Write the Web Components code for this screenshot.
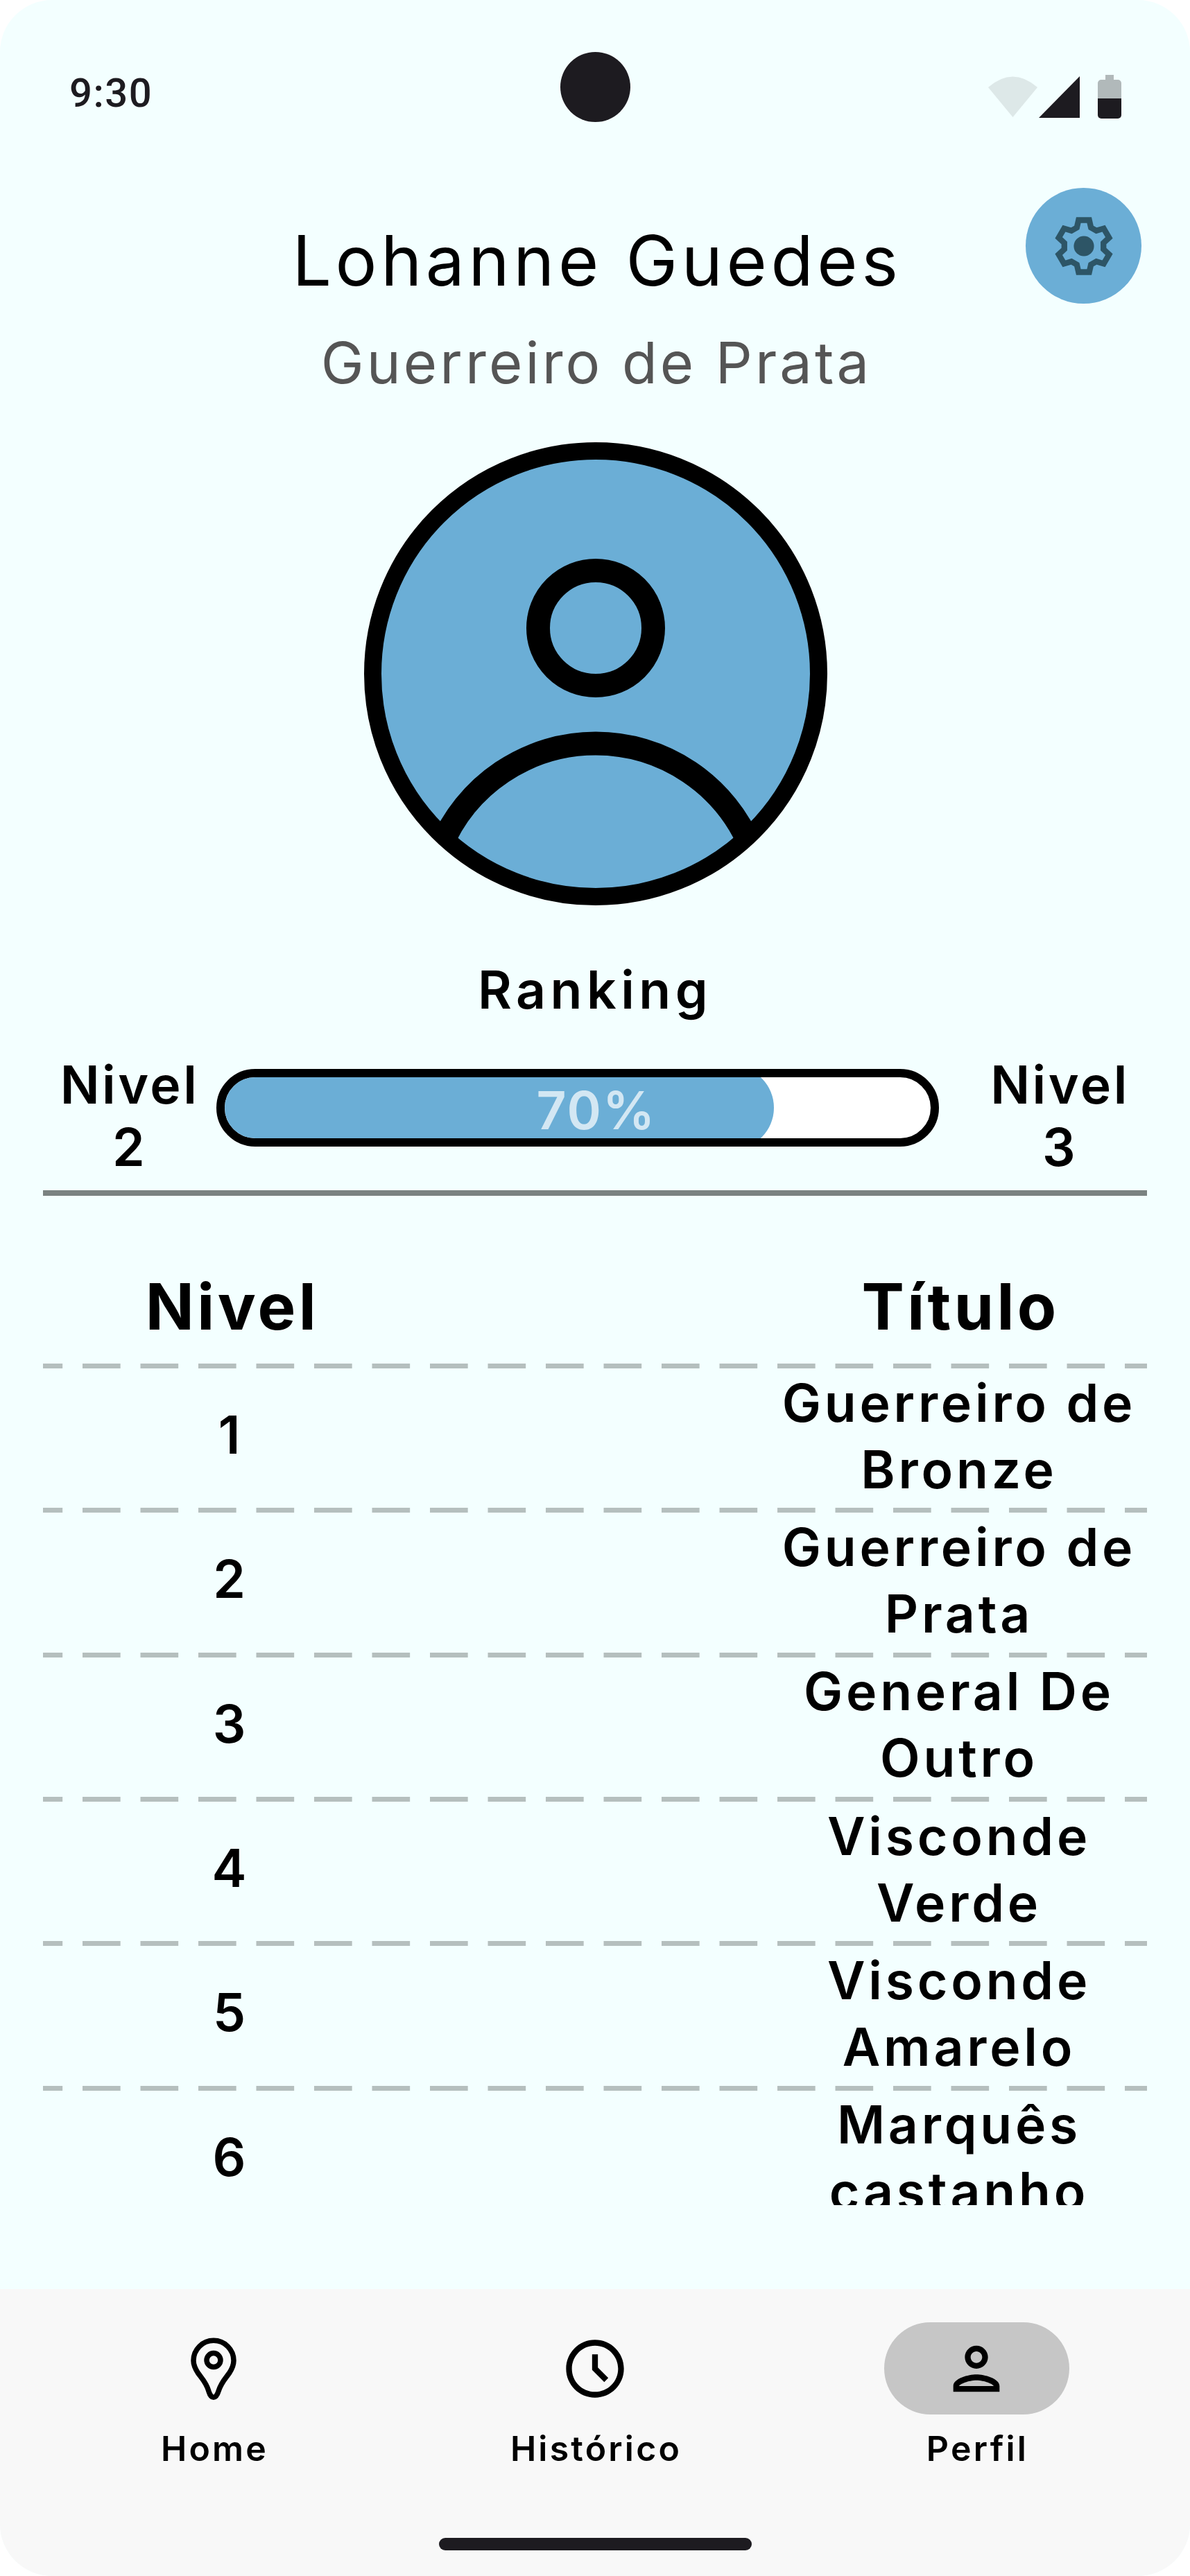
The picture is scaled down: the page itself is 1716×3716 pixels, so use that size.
<!DOCTYPE html>
<html lang="pt">
<head>
<meta charset="utf-8">
<title>Perfil</title>
<style>
	html, body { margin: 0; background: #fff; }
</style>
</head>
<body>
<phone-screen>
	<status-bar></status-bar>
	<profile-header name="Lohanne Guedes" rank="Guerreiro de Prata"></profile-header>
	<profile-avatar></profile-avatar>
	<rank-progress from="2" to="3" percent="70"></rank-progress>
	<rank-table>
		<rank-row level="1">Guerreiro de<br>Bronze</rank-row>
		<rank-row level="2">Guerreiro de<br>Prata</rank-row>
		<rank-row level="3">General De<br>Outro</rank-row>
		<rank-row level="4">Visconde<br>Verde</rank-row>
		<rank-row level="5">Visconde<br>Amarelo</rank-row>
		<rank-row level="6">Marquês<br>castanho</rank-row>
	</rank-table>
	<bottom-nav slot="nav">
		<nav-item>
			<svg slot="icon" width="100" height="100" viewBox="28.4 26.7 100 100" fill="none" stroke="#000" stroke-width="7.5">
				<path d="M78.4 36C94.4 36 107.4 49 107.4 65C107.4 72 105 77 101 83C96 90 89 97 85.5 109C84 114 81.5 118 78.4 118C75.3 118 72.8 114 71.3 109C68 97 61 90 56 83C52 77 49.4 72 49.4 65C49.4 49 62.4 36 78.4 36Z"/>
				<circle cx="78.4" cy="64.3" r="10"/>
			</svg>
			Home
		</nav-item>
		<nav-item>
			<svg slot="icon" width="100" height="100" viewBox="0 0 24 24">
				<path d="M11.99 2C6.47 2 2 6.48 2 12s4.47 10 9.99 10C17.52 22 22 17.52 22 12S17.52 2 11.99 2zM12 20c-4.42 0-8-3.58-8-8s3.58-8 8-8 8 3.58 8 8-3.58 8-8 8z"/>
				<path d="M11 7h2v4.6l3.6 3.6-1.4 1.4-4.2-4.2z"/>
			</svg>
			Histórico
		</nav-item>
		<nav-item active>
			<svg slot="icon" width="100" height="100" viewBox="0 0 24 24">
				<path d="M12 6c1.1 0 2 .9 2 2s-.9 2-2 2-2-.9-2-2 .9-2 2-2m0 10c2.7 0 5.8 1.29 6 2H6c.23-.72 3.31-2 6-2m0-12C9.79 4 8 5.79 8 8s1.79 4 4 4 4-1.79 4-4-1.79-4-4-4zm0 10c-2.67 0-8 1.34-8 4v2h16v-2c0-2.66-5.33-4-8-4z"/>
			</svg>
			Perfil
		</nav-item>
	</bottom-nav>
</phone-screen>

<script>
const FONT = `Inter, "Noto Sans", sans-serif`;

class PhoneScreen extends HTMLElement {
	constructor() {
		super();
		this.attachShadow({ mode: "open" }).innerHTML = `<style>
			:host {
				display: flex;
				flex-direction: column;
				width: 1716px;
				height: 3716px;
				background: #f3ffff;
				border-radius: 75px;
				overflow: hidden;
				color: #000;
				font-family: ${FONT};
			}
			main { flex: 1; display: flex; flex-direction: column; min-height: 0; }
		</style>
		<main><slot></slot></main>
		<slot name="nav"></slot>`;
	}
}
customElements.define("phone-screen", PhoneScreen);

class StatusBar extends HTMLElement {
	constructor() {
		super();
		this.attachShadow({ mode: "open" }).innerHTML = `<style>
			:host {
				display: grid;
				grid-template-columns: 1fr 101px 1fr;
				height: 271px;
				box-sizing: border-box;
				color: #1d1b20;
			}
			.time {
				font: 500 58px/70px Roboto, sans-serif;
				letter-spacing: 1.5px;
				padding: 99px 0 0 100px;
			}
			.camera {
				width: 101px;
				height: 101px;
				margin-top: 75px;
				border-radius: 50%;
				background: #1d1b20;
			}
			svg { justify-self: end; margin: 105px 96px 0 0; }
		</style>
		<div class="time">9:30</div>
		<div class="camera"></div>
		<svg width="200" height="70" viewBox="1420 105 200 70">
			<path d="M1460.5 169L1425 126Q1460.5 95 1496 126Z" fill="#dde8e8"/>
			<path d="M1557 110V170H1498Z" fill="#1d1b20"/>
			<path d="M1594 108h12v7h6a5 5 0 0 1 5 5v22h-34v-22a5 5 0 0 1 5-5h6z" fill="#b1b9ba"/>
			<path d="M1583 142h34v24a5 5 0 0 1-5 5h-24a5 5 0 0 1-5-5z" fill="#1d1b20"/>
		</svg>`;
	}
}
customElements.define("status-bar", StatusBar);

class SettingsButton extends HTMLElement {
	constructor() {
		super();
		// dente da engrenagem, repetido de 60 em 60 graus
		const tooth = [[-2.45, -6.4], [-1.85, -9], [1.85, -9], [2.45, -6.4]];
		const pts = [];
		for (let i = 0; i < 6; i++) {
			const a = (i * Math.PI) / 3;
			const c = Math.cos(a);
			const s = Math.sin(a);
			tooth.forEach(([x, y]) => {
				pts.push(`${(12 + x * c - y * s).toFixed(2)},${(12 + x * s + y * c).toFixed(2)}`);
			});
		}
		this.attachShadow({ mode: "open" }).innerHTML = `<style>
			:host {
				display: flex;
				align-items: center;
				justify-content: center;
				width: 167px;
				height: 167px;
				border-radius: 50%;
				background: #6baed6;
			}
		</style>
		<svg width="100" height="100" viewBox="0 0 24 24">
			<polygon points="${pts.join(" ")}" fill="none" stroke="#2d5566" stroke-width="2"/>
			<circle cx="12" cy="12" r="3.5" fill="#2d5566"/>
		</svg>`;
	}
}
customElements.define("settings-button", SettingsButton);

class ProfileHeader extends HTMLElement {
	constructor() {
		super();
		this.attachShadow({ mode: "open" }).innerHTML = `<style>
			:host {
				display: grid;
				grid-template-columns: 1fr auto 1fr;
				text-align: center;
			}
			h1 {
				grid-column: 2;
				grid-row: 1;
				margin: 45px 0 0;
				padding-left: 6px;
				font: 400 100px/120px ${FONT};
				letter-spacing: 5.6px;
			}
			p {
				grid-column: 2;
				grid-row: 2;
				margin: 37px 0 0;
				padding-left: 4px;
				font: 400 83px/100px ${FONT};
				letter-spacing: 4.1px;
				color: #555;
			}
			settings-button {
				grid-column: 3;
				grid-row: 1 / 3;
				justify-self: end;
				margin-right: 70px;
			}
		</style>
		<h1>${this.getAttribute("name")}</h1>
		<p>${this.getAttribute("rank")}</p>
		<settings-button></settings-button>`;
	}
}
customElements.define("profile-header", ProfileHeader);

class ProfileAvatar extends HTMLElement {
	constructor() {
		super();
		this.attachShadow({ mode: "open" }).innerHTML = `<style>
			:host {
				display: flex;
				justify-content: center;
				margin-top: 65px;
			}
			svg { display: block; margin-left: 2px; }
		</style>
		<svg width="668" height="668" viewBox="0 0 668 668" fill="none" stroke="#000">
			<clipPath id="disc"><circle cx="334" cy="334" r="330"/></clipPath>
			<circle cx="334" cy="334" r="321.5" fill="#6baed6" stroke="none"/>
			<circle cx="334" cy="268" r="83" stroke-width="34"/>
			<path d="M110 585A242 242 0 0 1 558 585" stroke-width="34" clip-path="url(#disc)"/>
			<circle cx="334" cy="334" r="321.5" stroke-width="25"/>
		</svg>`;
	}
}
customElements.define("profile-avatar", ProfileAvatar);

class RankProgress extends HTMLElement {
	constructor() {
		super();
		const percent = this.getAttribute("percent");
		this.attachShadow({ mode: "open" }).innerHTML = `<style>
			:host {
				display: block;
				padding: 0 62px;
				font: 600 75px/90px ${FONT};
				text-align: center;
				letter-spacing: 3.5px;
			}
			h2 {
				margin: 74px 0 44px;
				font: inherit;
				line-height: 96px;
				letter-spacing: 6.5px;
			}
			.row {
				display: grid;
				grid-template-columns: 250px 1042px 1fr;
				padding-bottom: 17px;
				border-bottom: 8px solid #7a8281;
			}
			.next { padding-left: 49px; }
			.bar {
				position: relative;
				box-sizing: border-box;
				height: 112px;
				margin-top: 22px;
				border: 12px solid #000;
				border-radius: 56px;
				background: #fff;
				overflow: hidden;
			}
			.fill {
				width: 792px;
				height: 120px;
				margin-top: -16px;
				background: #6baed6;
				border-radius: 0 60px 60px 0;
			}
			.value {
				position: absolute;
				inset: 0 0 0 54px;
				line-height: 96px;
				color: rgba(255, 255, 255, .7);
				letter-spacing: 2px;
			}
		</style>
		<h2>Ranking</h2>
		<div class="row">
			<div>Nivel<br>${this.getAttribute("from")}</div>
			<div class="bar">
				<div class="fill"></div>
				<div class="value">${percent}%</div>
			</div>
			<div class="next">Nivel<br>${this.getAttribute("to")}</div>
		</div>`;
	}
}
customElements.define("rank-progress", RankProgress);

class RankTable extends HTMLElement {
	constructor() {
		super();
		this.attachShadow({ mode: "open" }).innerHTML = `<style>
			:host {
				display: block;
				padding: 105px 62px 0;
			}
			.head {
				display: grid;
				grid-template-columns: 542px 1fr 542px;
				margin-bottom: 27px;
				font: 700 92px/110px ${FONT};
				text-align: center;
				letter-spacing: 4.4px;
			}
			.head div { padding-left: 4px; }
			.head div:last-child { grid-column: 3; }
			.rows { height: 1214px; overflow: hidden; }
		</style>
		<div class="head"><div>Nivel</div><div>Título</div></div>
		<div class="rows"><slot></slot></div>`;
	}
}
customElements.define("rank-table", RankTable);

class RankRow extends HTMLElement {
	constructor() {
		super();
		this.attachShadow({ mode: "open" }).innerHTML = `<style>
			:host {
				display: grid;
				grid-template-columns: 542px 1fr 542px;
				align-items: center;
				box-sizing: border-box;
				height: 208.33px;
				padding: 7px 0 6px;
				background: linear-gradient(90deg, #b5bfbe 55px, transparent 55px) -26.5px 0 / 83.5px 7px repeat-x;
				font: 600 75px/96px ${FONT};
				text-align: center;
				letter-spacing: 4.8px;
			}
			.level { margin-top: -3px; }
			.title { grid-column: 3; white-space: nowrap; }
		</style>
		<div class="level">${this.getAttribute("level")}</div>
		<div class="title"><slot></slot></div>`;
	}
}
customElements.define("rank-row", RankRow);

class BottomNav extends HTMLElement {
	constructor() {
		super();
		this.attachShadow({ mode: "open" }).innerHTML = `<style>
			:host {
				display: flex;
				flex-direction: column;
				flex: none;
				height: 414px;
				box-sizing: border-box;
				padding: 48px 33px 37px;
				background: #f8f8f8;
			}
			.items { display: grid; grid-template-columns: repeat(3, 1fr); }
			.handle {
				width: 451px;
				height: 18px;
				margin: auto auto 0;
				border-radius: 9px;
				background: #1d1b20;
			}
		</style>
		<div class="items"><slot></slot></div>
		<div class="handle"></div>`;
	}
}
customElements.define("bottom-nav", BottomNav);

class NavItem extends HTMLElement {
	constructor() {
		super();
		this.attachShadow({ mode: "open" }).innerHTML = `<style>
			:host {
				display: flex;
				flex-direction: column;
				align-items: center;
				gap: 16px;
				font: 600 50px/66px ${FONT};
				letter-spacing: 3.2px;
			}
			.pill {
				display: flex;
				align-items: center;
				justify-content: center;
				width: 267px;
				height: 133px;
				border-radius: 67px;
			}
			.label { padding-left: 3px; }
			:host([active]) .pill { background: #c6c6c6; }
		</style>
		<div class="pill"><slot name="icon"></slot></div>
		<div class="label"><slot></slot></div>`;
	}
}
customElements.define("nav-item", NavItem);
</script>
</body>
</html>
